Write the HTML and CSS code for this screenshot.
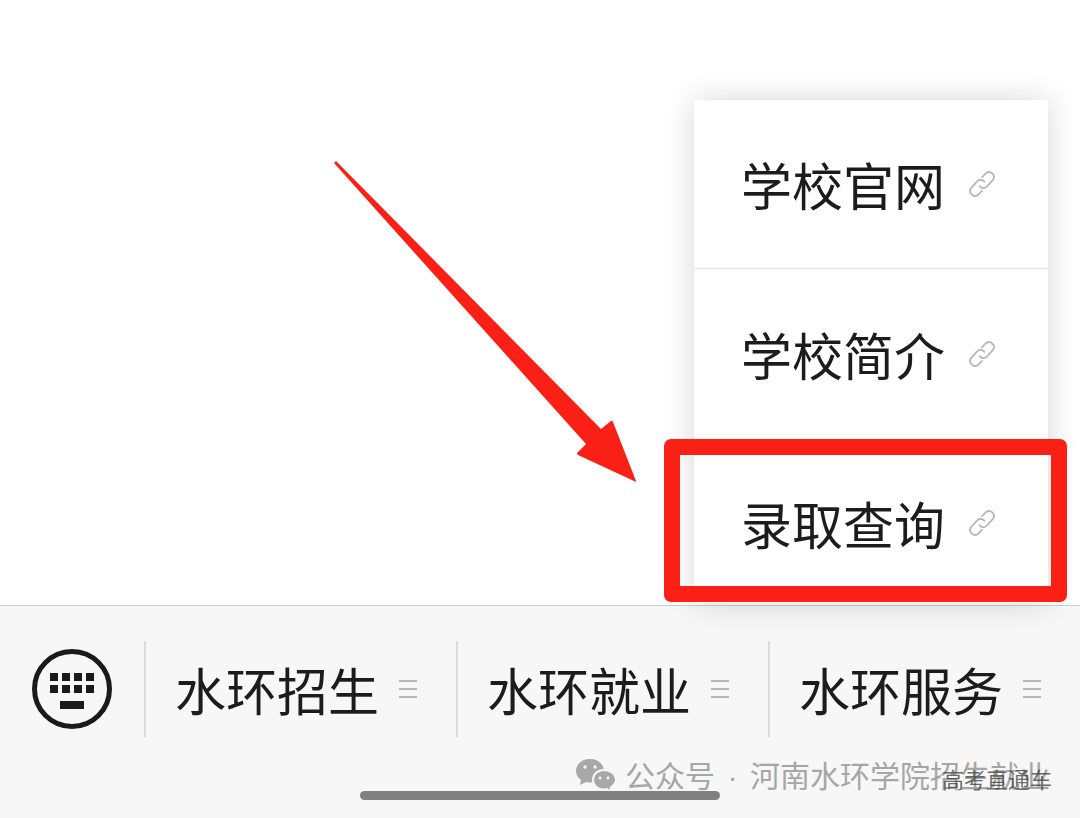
FILE: index.html
```html
<!DOCTYPE html>
<html lang="zh-CN">
<head>
<meta charset="utf-8">
<title>水环菜单</title>
<link rel="stylesheet" href="styles.css">
</head>
<body>
<div class="screen">
  <main class="content"></main>
  <nav class="bar">
    <div class="kbd">
      <svg class="kbd-icon" viewBox="0 0 80 80" width="80" height="80">
        <circle cx="40" cy="40" r="37.5" fill="none" stroke="#1a1a1a" stroke-width="5"/>
        <g fill="#1a1a1a">
          <rect x="18" y="24" width="8" height="8"/><rect x="30" y="24" width="8" height="8"/><rect x="42" y="24" width="8" height="8"/><rect x="54" y="24" width="8" height="8"/>
          <rect x="18" y="36" width="8" height="8"/><rect x="30" y="36" width="8" height="8"/><rect x="42" y="36" width="8" height="8"/><rect x="54" y="36" width="8" height="8"/>
          <rect x="28" y="52" width="24" height="8"/>
        </g>
      </svg>
    </div>
    <div class="tab"><span class="tab-label">水环招生</span><span class="burger"><i></i><i></i><i></i></span></div>
    <div class="tab"><span class="tab-label">水环就业</span><span class="burger"><i></i><i></i><i></i></span></div>
    <div class="tab"><span class="tab-label">水环服务</span><span class="burger"><i></i><i></i><i></i></span></div>
  </nav>

  <ul class="menu">
    <li class="menu-item"><span class="menu-label">学校官网</span>
      <svg class="link" viewBox="0 0 26 26" width="30" height="30"><path d="M11 15A4.300 4.300 0 0 0 17 15.500L22.500 9.500A4.300 4.300 0 0 0 16.500 3.500L13 7"/><path d="M15 11A4.300 4.300 0 0 0 9 10.500L3.500 16.500A4.300 4.300 0 0 0 9.500 22.500L13 19"/></svg></li>
    <li class="menu-item"><span class="menu-label">学校简介</span>
      <svg class="link" viewBox="0 0 26 26" width="30" height="30"><path d="M11 15A4.300 4.300 0 0 0 17 15.500L22.500 9.500A4.300 4.300 0 0 0 16.500 3.500L13 7"/><path d="M15 11A4.300 4.300 0 0 0 9 10.500L3.500 16.500A4.300 4.300 0 0 0 9.500 22.500L13 19"/></svg></li>
    <li class="menu-item"><span class="menu-label">录取查询</span>
      <svg class="link" viewBox="0 0 26 26" width="30" height="30"><path d="M11 15A4.300 4.300 0 0 0 17 15.500L22.500 9.500A4.300 4.300 0 0 0 16.500 3.500L13 7"/><path d="M15 11A4.300 4.300 0 0 0 9 10.500L3.500 16.500A4.300 4.300 0 0 0 9.500 22.500L13 19"/></svg></li>
  </ul>

  <div class="highlight"></div>
  <svg class="arrow" viewBox="0 0 1080 818" width="1080" height="818">
    <path d="M334 163 L336 161 L601 429 L611 421 Q612 420 613 422 L636 481 Q636 482 634 481 L578 455 Q576 453 578 452 L586 444 Z" fill="#fb2016"/>
  </svg>

  <div class="watermark">
    <svg class="wechat" viewBox="0 0 42 36" width="42" height="36">
      <path d="M15 1C7 1 1 6 1 13c0 4 2 7 5 9l-1 5 6-3c1 .3 3 .5 4 .5 8 0 14-5 14-11.500S23 1 15 1z" fill="#a8a8a8"/>
      <path d="M29 12c-6.500 0-11 4.300-11 9.800S22.500 31.500 29 31.500c1.200 0 2.300-.2 3.300-.5l4.200 3.500-.8-5c2.700-1.800 5.300-4.200 5.300-7.700C41 16.300 35.500 12 29 12z" fill="#a8a8a8" stroke="#f7f7f7" stroke-width="2"/>
      <g fill="#f7f7f7"><circle cx="10" cy="9" r="1.700"/><circle cx="20" cy="9" r="1.700"/><circle cx="25" cy="20" r="1.400"/><circle cx="33" cy="20" r="1.400"/></g>
    </svg>
    <span class="wm-text">公众号<span class="wm-dot">·</span>河南水环学院招生就业</span>
  </div>
  <div class="home"></div>
  <span class="wm-small">高考直通车</span>
</div>
</body>
</html>
```
FILE: styles.css
```css
* { box-sizing: border-box; }
html, body { margin: 0; padding: 0; background: #fff; }
body { font-family: "Noto Sans CJK SC", "Liberation Sans", sans-serif; color: #1c1c1c; }
.screen { position: relative; width: 1080px; height: 818px; display: flex; flex-direction: column; overflow: hidden; }
.content { flex: 1 1 auto; background: #fff; }
.bar { flex: 0 0 213px; display: flex; align-items: flex-start; padding-top: 35px; background: #f7f7f7; border-top: 1px solid #ccc; }
.kbd { width: 144px; height: 96px; display: flex; align-items: center; justify-content: center; }
.kbd-icon { display: block; }
.tab { width: 312px; height: 96px; display: flex; align-items: center; gap: 20px; padding-left: 29px; border-left: 2px solid #dcdcdc; }
.tab-label { font-size: 51px; line-height: 60px; white-space: nowrap; }
.burger { width: 18px; display: flex; flex-direction: column; gap: 6px; }
.burger i { display: block; height: 2px; background: #b8b8b8; }
.menu { position: absolute; left: 694px; top: 100px; width: 354px; height: 503px; margin: 0; padding: 0; list-style: none; background: #fff; box-shadow: 0 0 30px rgba(0,0,0,.16); }
.menu-item { height: 169px; display: flex; align-items: center; padding-left: 47px; gap: 22px; border-bottom: 1px solid #e4e4e4; }
.menu-item:nth-child(2) { border-bottom: 0; }
.menu-item:last-child { border-bottom: 0; }
.menu-label { font-size: 51px; line-height: 60px; white-space: nowrap; }
.link { fill: none; stroke: #b8b8b8; stroke-width: 1.600; stroke-linecap: round; stroke-linejoin: round; }
.highlight { position: absolute; left: 664px; top: 439px; width: 403px; height: 163px; border: 16px solid #fb2016; border-radius: 7px; }
.arrow { position: absolute; left: 0; top: 0; pointer-events: none; }
.watermark { position: absolute; left: 575px; top: 756px; display: flex; align-items: center; gap: 8px; }
.wechat { display: block; }
.wm-text { font-size: 30px; line-height: 36px; color: #a6a6a6; white-space: nowrap; }
.wm-dot { display: inline-block; width: 35px; text-align: center; font-family: "Liberation Sans", sans-serif; }
.home { position: absolute; left: 360px; top: 791px; width: 360px; height: 9px; border-radius: 5px; background: #808080; }
.wm-small { position: absolute; left: 942px; top: 764px; font-size: 22px; line-height: 28px; color: rgba(60,60,60,.75); white-space: nowrap; }
```
